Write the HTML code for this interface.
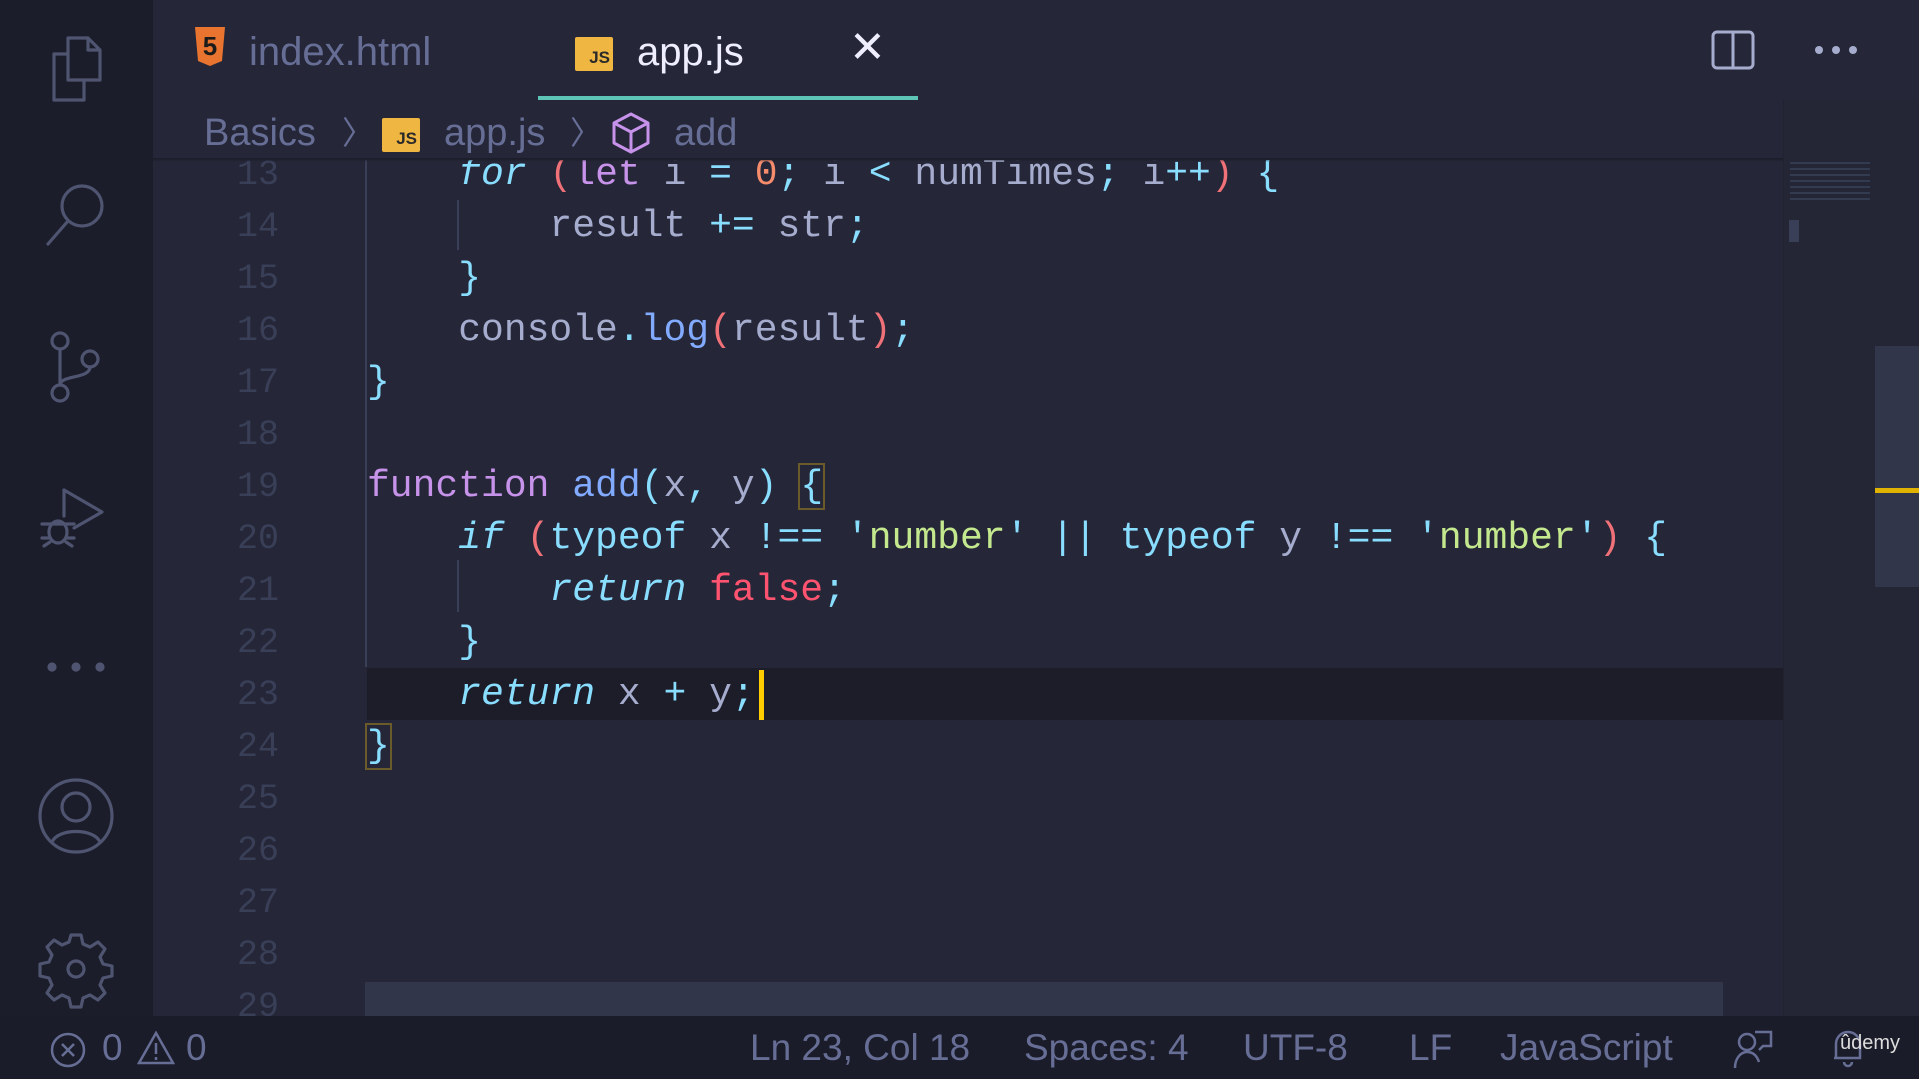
<!DOCTYPE html>
<html><head><meta charset="utf-8"><style>
*{margin:0;padding:0;box-sizing:border-box}
body{width:1919px;height:1079px;overflow:hidden;background:#252738;font-family:"Liberation Sans",sans-serif;position:relative}
.act{position:absolute;left:0;top:0;width:153px;height:1016px;background:#1b1d2a}
.act svg{position:absolute;left:38px;width:76px;height:76px;fill:none;stroke:#4f5470;stroke-width:3.2;stroke-linecap:round;stroke-linejoin:round;overflow:visible}
.tabs{position:absolute;left:153px;top:0;right:0;height:100px;background:#252738}
.tab{position:absolute;top:0;height:100px;font-size:40px;line-height:104px}
.ul{position:absolute;left:538px;top:96px;width:380px;height:4px;background:#5ec4b6}
.cr{position:absolute;top:108px;font-size:38px;color:#676e95;line-height:50px;white-space:nowrap}
.jsi{display:inline-block;background:#f0b642;color:#2a2a2a;font-weight:bold;font-size:17px;width:38px;height:34px;text-align:right;padding:10px 3px 0 0;line-height:22px;vertical-align:middle;border-radius:2px}
.ed{position:absolute;left:153px;top:160px;width:1630px;height:856px;overflow:hidden}
.line{position:absolute;left:0;height:52px;width:1630px;font-family:"Liberation Mono",monospace;font-size:38px;line-height:52px;white-space:pre;color:#a6accd}
.ln{position:absolute;left:0;width:126px;text-align:right;color:#3a3f58;font-size:35px}
.code{position:absolute;left:214px}
.k{color:#c792ea}.c{color:#89ddff}.i{color:#89ddff;font-style:italic}.f{color:#82aaff}.s{color:#c3e88d}.r{color:#f07178}.n{color:#f78c6c}.b{color:#ff5370}
.status{position:absolute;left:0;top:1016px;width:1919px;height:63px;background:#1b1c2a;color:#676e95;font-size:37px;line-height:63px}
.status span{position:absolute;top:0}
</style></head><body>
<div class="act">
<svg style="top:30px" viewBox="0 0 76 76"><path d="M30 8h20l12 12v30H30z M50 8v12h12 M30 24H16v46h30V50"/></svg>
<svg style="top:176px" viewBox="0 0 76 76"><circle cx="44" cy="30" r="20"/><path d="M30 45L10 68"/></svg>
<svg style="top:329px" viewBox="0 0 76 76"><circle cx="22" cy="12" r="8"/><circle cx="22" cy="64" r="8"/><circle cx="52" cy="30" r="8"/><path d="M22 20v36 M52 38c0 12-30 8-30 18"/></svg>
<svg style="top:476px" viewBox="0 0 76 76"><path d="M26 14V40 M26 14l38 22-28 16"/><ellipse cx="20" cy="56" rx="9" ry="11"/><path d="M4 48h32 M4 62h8 M28 62h8 M6 70l6-4 M34 70l-6-4"/></svg>
<svg style="top:629px" viewBox="0 0 76 76"><circle cx="14" cy="38" r="3" fill="#4f5470"/><circle cx="38" cy="38" r="3" fill="#4f5470"/><circle cx="62" cy="38" r="3" fill="#4f5470"/></svg>
<svg style="top:778px" viewBox="0 0 76 76"><circle cx="38" cy="38" r="36"/><circle cx="38" cy="29" r="14"/><path d="M14 64c6-14 42-14 48 0"/></svg>
<svg style="top:931px" viewBox="0 0 76 76"><circle cx="38" cy="38" r="8"/><path d="M33 4h10l2 9 7 3 8-5 7 7-5 8 3 7 9 2v10l-9 2-3 7 5 8-7 7-8-5-7 3-2 9H33l-2-9-7-3-8 5-7-7 5-8-3-7-9-2V33l9-2 3-7-5-8 7-7 8 5 7-3z"/></svg>
</div>
<div class="tabs">
<div class="tab" style="left:40px;color:#676e95"><svg width="34" height="40" viewBox="0 0 34 40" style="vertical-align:-2px;margin-right:22px"><path d="M2 0h30l-3 34-12 5-12-5z" fill="#e8742f"/><text x="17" y="28" font-size="26" font-weight="bold" fill="#1b1b1b" text-anchor="middle" font-family="Liberation Sans">5</text></svg>index.html</div>
<div class="tab" style="left:422px;color:#eeeeff"><span class="jsi" style="margin-right:24px;vertical-align:2px">JS</span>app.js</div>
<div class="tab" style="left:696px;color:#eeeeff;font-size:44px;line-height:96px">✕</div>
<svg style="position:absolute;left:1558px;top:30px" width="44" height="40" viewBox="0 0 44 40"><rect x="2" y="2" width="40" height="36" rx="4" fill="none" stroke="#a6accd" stroke-width="3"/><path d="M22 2v36" stroke="#a6accd" stroke-width="3"/></svg>
<svg style="position:absolute;left:1660px;top:42px" width="46" height="16"><circle cx="6" cy="8" r="4" fill="#a6accd"/><circle cx="23" cy="8" r="4" fill="#a6accd"/><circle cx="40" cy="8" r="4" fill="#a6accd"/></svg>
</div>
<div class="ul"></div>
<div class="cr" style="left:204px">Basics</div>
<div class="cr" style="left:342px;font-size:32px">〉</div>
<div class="cr" style="left:382px"><span class="jsi">JS</span></div>
<div class="cr" style="left:444px">app.js</div>
<div class="cr" style="left:570px;font-size:32px">〉</div>
<svg style="position:absolute;left:610px;top:111px" width="42" height="44" viewBox="0 0 42 44"><path d="M21 3L38 12v20L21 41 4 32V12z M4 12l17 9 17-9 M21 21v20" fill="none" stroke="#c792ea" stroke-width="3" stroke-linejoin="round"/></svg>
<div class="cr" style="left:674px">add</div>
<div class="ed">
<div style="position:absolute;left:214px;top:508px;width:1416px;height:52px;background:#1c1d29"></div>
<div style="position:absolute;left:212px;top:-20px;width:2px;height:430px;background:#3a3f58"></div>
<div style="position:absolute;left:212px;top:357px;width:2px;height:150px;background:#3a3f58"></div>
<div style="position:absolute;left:304px;top:40px;width:2px;height:50px;background:#3a3f58"></div>
<div style="position:absolute;left:304px;top:400px;width:2px;height:52px;background:#3a3f58"></div>
<div class="line" style="top:-11px"><span class="ln">13</span><span class="code">    <span class="i">for</span> <span class="r">(</span><span class="k">let</span> i <span class="c">=</span> <span class="n">0</span><span class="c">;</span> i <span class="c">&lt;</span> numTimes<span class="c">;</span> i<span class="c">++</span><span class="r">)</span> <span class="c">{</span></span></div>
<div class="line" style="top:41px"><span class="ln">14</span><span class="code">        result <span class="c">+=</span> str<span class="c">;</span></span></div>
<div class="line" style="top:93px"><span class="ln">15</span><span class="code">    <span class="c">}</span></span></div>
<div class="line" style="top:145px"><span class="ln">16</span><span class="code">    console<span class="c">.</span><span class="f">log</span><span class="r">(</span>result<span class="r">)</span><span class="c">;</span></span></div>
<div class="line" style="top:197px"><span class="ln">17</span><span class="code"><span class="c">}</span></span></div>
<div class="line" style="top:249px"><span class="ln">18</span></div>
<div class="line" style="top:301px"><span class="ln">19</span><span class="code"><span class="k">function</span> <span class="f">add</span><span class="c">(</span>x<span class="c">,</span> y<span class="c">)</span> <span class="c" style="outline:2px solid #6b5a2a">{</span></span></div>
<div class="line" style="top:353px"><span class="ln">20</span><span class="code">    <span class="i">if</span> <span class="r">(</span><span class="c">typeof</span> x <span class="c">!==</span> <span class="c">'</span><span class="s">number</span><span class="c">'</span> <span class="c">||</span> <span class="c">typeof</span> y <span class="c">!==</span> <span class="c">'</span><span class="s">number</span><span class="c">'</span><span class="r">)</span> <span class="c">{</span></span></div>
<div class="line" style="top:405px"><span class="ln">21</span><span class="code">        <span class="i">return</span> <span class="b">false</span><span class="c">;</span></span></div>
<div class="line" style="top:457px"><span class="ln">22</span><span class="code">    <span class="c">}</span></span></div>
<div class="line" style="top:509px"><span class="ln">23</span><span class="code">    <span class="i">return</span> x <span class="c">+</span> y<span class="c">;</span></span></div>
<div style="position:absolute;left:606px;top:510px;width:5px;height:50px;background:#ffcc00"></div>
<div class="line" style="top:561px"><span class="ln">24</span><span class="code"><span class="c" style="outline:2px solid #6b5a2a">}</span></span></div>
<div class="line" style="top:613px"><span class="ln">25</span></div>
<div class="line" style="top:665px"><span class="ln">26</span></div>
<div class="line" style="top:717px"><span class="ln">27</span></div>
<div class="line" style="top:769px"><span class="ln">28</span></div>
<div class="line" style="top:821px"><span class="ln">29</span></div>
<div style="position:absolute;left:212px;top:822px;width:1358px;height:34px;background:#32364b"></div>
</div>
<div style="position:absolute;left:153px;top:158px;width:1630px;height:4px;background:linear-gradient(#1b1c28,transparent)"></div>
<div style="position:absolute;left:1783px;top:100px;width:136px;height:916px;background:#242636;border-left:1px solid #21222f"></div>
<div style="position:absolute;left:1790px;top:162px;width:80px;height:40px;background:repeating-linear-gradient(#4a5a7a 0 2px,transparent 2px 6px);opacity:.4"></div>
<div style="position:absolute;left:1789px;top:220px;width:10px;height:22px;background:#3a3f58"></div>
<div style="position:absolute;left:1875px;top:346px;width:44px;height:241px;background:#32364b"></div>
<div style="position:absolute;left:1875px;top:488px;width:44px;height:5px;background:#e0b300"></div>
<div class="status">
<svg style="position:absolute;left:50px;top:16px" width="36" height="36" viewBox="0 0 36 36"><circle cx="18" cy="18" r="16" fill="none" stroke="#676e95" stroke-width="2.5"/><path d="M12 12l12 12M24 12L12 24" stroke="#676e95" stroke-width="2.5"/></svg>
<span style="left:102px">0</span>
<svg style="position:absolute;left:137px;top:14px" width="38" height="36" viewBox="0 0 38 36"><path d="M19 3L36 33H2z M19 13v11 M19 27v3" fill="none" stroke="#676e95" stroke-width="2.5"/></svg>
<span style="left:186px">0</span>
<span style="left:750px">Ln 23, Col 18</span>
<span style="left:1024px">Spaces: 4</span>
<span style="left:1243px">UTF-8</span>
<span style="left:1409px">LF</span>
<span style="left:1500px">JavaScript</span>
<svg style="position:absolute;left:1733px;top:12px" width="42" height="42" viewBox="0 0 42 42"><circle cx="14" cy="14" r="8" fill="none" stroke="#676e95" stroke-width="2.5"/><path d="M2 40c0-10 6-16 12-16s10 4 12 10 M22 4h16v14h-8l-4 4" fill="none" stroke="#676e95" stroke-width="2.5"/></svg>
<svg style="position:absolute;left:1830px;top:12px" width="36" height="40" viewBox="0 0 36 40"><path d="M6 30V16a12 12 0 0 1 24 0v14H4 M14 34a4 4 0 0 0 8 0" fill="none" stroke="#676e95" stroke-width="2.5"/></svg>
<span style="left:1840px;top:12px;font-size:20px;color:#ddd;line-height:30px">ûdemy</span>
</div>
</body></html>
